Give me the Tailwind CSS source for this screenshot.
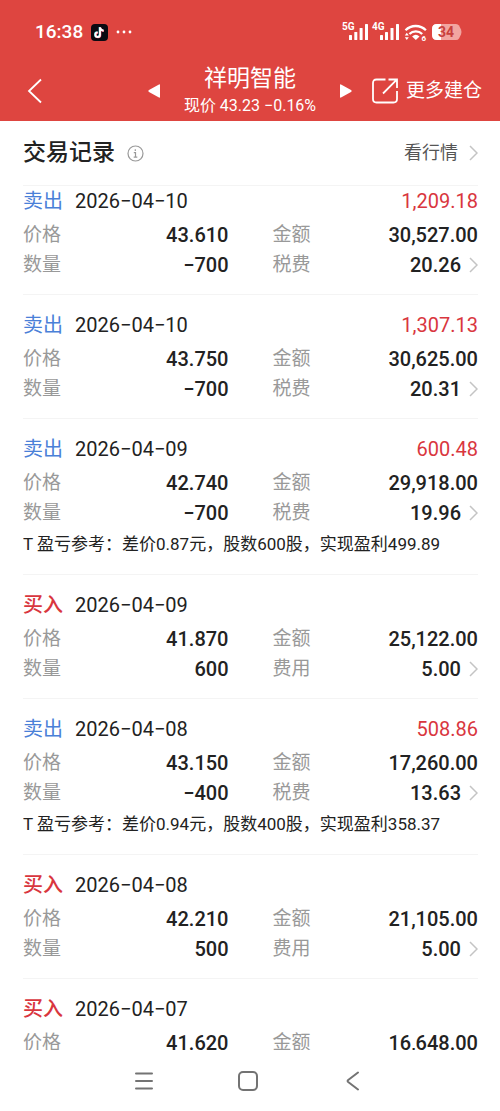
<!DOCTYPE html>
<html lang="zh-CN">

<head>
    <meta charset="UTF-8" />
    <meta name="viewport" content="width=device-width, initial-scale=1.0" />
    <title>祥明智能 - 交易记录</title>
    <script src="https://cdn.jsdelivr.net/npm/@tailwindcss/browser@4"></script>
</head>

<body class="h-screen flex flex-col overflow-hidden bg-white text-[#222222] font-[Roboto,'Noto_Sans_CJK_SC',sans-serif]">
    <header class="bg-[#de4540] text-white shrink-0">
        <!-- Status bar -->
        <div class="flex items-center justify-between h-[60px] pt-1 pl-[35px] pr-[38px]">
            <div class="flex items-center gap-2">
                <span class="text-[19px] leading-6 font-medium">16:38</span>
                <svg class="w-[17px] h-[17px]" viewBox="0 0 17 17">
                    <rect width="17" height="17" rx="4" fill="#0a0a12" />
                    <g fill="none" stroke-width="1.9">
                        <path d="M8.6 3v7.4a2.3 2.3 0 1 1-2.3-2.3M8.6 3.2c.3 1.8 1.6 3 3.6 3.2" stroke="#3fd9e4" />
                        <path d="M9.4 3.6V11a2.3 2.3 0 1 1-2.3-2.3M9.4 3.8c.3 1.8 1.6 3 3.6 3.2" stroke="#ef3a5d" />
                        <path d="M9 3.3v7.4a2.3 2.3 0 1 1-2.3-2.3M9 3.5c.3 1.8 1.6 3 3.6 3.2" stroke="#fff" />
                    </g>
                </svg>
                <svg class="w-4 h-1" viewBox="0 0 16 4" fill="#fff">
                    <circle cx="2" cy="2" r="1.4" />
                    <circle cx="8" cy="2" r="1.4" />
                    <circle cx="14" cy="2" r="1.4" />
                </svg>
            </div>
            <svg class="w-[120px] h-5" viewBox="0 0 120 20" fill="#fff">
                <g font-family="Roboto" font-weight="700" font-size="10">
                    <text x="0" y="8">5G</text>
                    <text x="30" y="8">4G</text>
                </g>
                <g>
                    <rect x="7" y="13" width="3" height="5" rx=".6" />
                    <rect x="12.300" y="10" width="3" height="8" rx=".6" />
                    <rect x="17.600" y="6" width="3" height="12" rx=".6" />
                    <rect x="23" y="2" width="3" height="16" rx=".6" />
                    <rect x="38" y="13" width="3" height="5" rx=".6" />
                    <rect x="43" y="10" width="3" height="8" rx=".6" />
                    <rect x="48.500" y="6" width="3" height="12" rx=".6" />
                    <rect x="54" y="2" width="3" height="16" rx=".6" />
                </g>
                <g fill="none" stroke="#fff" stroke-width="2.300">
                    <path d="M63.500 8.200a14.500 14.500 0 0 1 20.400 0" />
                    <path d="M67.400 12a9.300 9.300 0 0 1 12.800 0" />
                </g>
                <path d="M73.800 18l-3.700-3.500a5.600 5.600 0 0 1 7.400 0z" />
                <path d="M64.800 10.800l2 2.800h-4zM64.800 18l2-2.800h-4z" />
                <text x="79.500" y="18.500" font-family="Roboto" font-weight="700" font-size="8">6</text>
                <path d="M95 2h19q2 0 3 1.500l2 4q1 2.500 0 5l-2 4q-1 1.500-3 1.500H95q-5 0-5-5V7q0-5 5-5z" fill="#f2a5a0" />
                <path d="M95 2h4v16h-4q-5 0-5-5V7q0-5 5-5z" />
                <text x="96" y="15" font-family="Roboto" font-weight="700" font-size="14" fill="#c9403c">34</text>
            </svg>
        </div>
        <!-- Stock switcher -->
        <div class="grid grid-cols-[160px_1fr_160px] items-center h-[61px]">
            <div class="flex items-center justify-between pl-[27px]">
                <button aria-label="返回">
                    <svg class="w-[15px] h-[26px]" viewBox="0 0 15 26" fill="none" stroke="#fff" stroke-width="1.800"><path d="M14 1.500L2 13l12 11.500" /></svg>
                </button>
                <button aria-label="上一只">
                    <svg class="w-3 h-[14px]" viewBox="0 0 12 14" fill="#fff"><path d="M12 1v12q0 1-1 .6L1 8Q-.3 7 1 6L11 .4q1-.4 1 .6z" /></svg>
                </button>
            </div>
            <div class="text-center">
                <h1 class="text-[23px] leading-[30px] font-normal">祥明智能</h1>
                <p class="text-[16px] leading-6 whitespace-nowrap">现价 43.23 −0.16%</p>
            </div>
            <div class="flex items-center">
                <button aria-label="下一只">
                    <svg class="w-3 h-[14px]" viewBox="0 0 12 14" fill="#fff"><path d="M0 1v12q0 1 1 .6L11 8q1.300-1 0-2L1 .4Q0 0 0 1z" /></svg>
                </button>
                <a href="#" class="flex items-center gap-2 pl-5 text-[19px] leading-7 whitespace-nowrap">
                    <svg class="w-[26px] h-[26px]" viewBox="0 0 26 26" fill="none" stroke="#fff" stroke-width="1.800"><path d="M13.500 1.500H4.500Q1 1.500 1 5v16q0 3.500 3.500 3.500h17q3.500 0 3.500-3.500v-8M11 15.500L24.500 1.800M16.500 1.500H25V10" /></svg>
                    更多建仓
                </a>
            </div>
        </div>
    </header>

    <main class="flex-1 min-h-0 flex flex-col pl-[23px] pr-[22px]">
        <div class="flex items-center justify-between h-16 shrink-0">
            <div class="flex items-center gap-3">
                <h2 class="text-[23px] leading-8 font-medium">交易记录</h2>
                <button aria-label="说明">
                    <svg class="w-[17px] h-[17px]" viewBox="0 0 17 17" fill="none" stroke="#999" stroke-width="1.200">
                        <circle cx="8.500" cy="8.500" r="7.500" />
                        <path d="M8.300 4.300v1.600M6.800 7.700h1.700v4.500M6.700 12.200h3.600" />
                    </svg>
                </button>
            </div>
            <a href="#" class="flex items-center gap-[11px] text-[18px] leading-6 text-[#555555]">
                看行情
                <svg class="w-[9px] h-4" viewBox="0 0 9 16" fill="none" stroke="#c4c4c4" stroke-width="1.500"><path d="M1 1l7 7-7 7" /></svg>
            </a>
        </div>
        <ul id="records" class="flex-1 min-h-0 overflow-hidden"></ul>
    </main>

    <!-- System navigation -->
    <nav class="flex items-center justify-center h-[61px] shrink-0 pr-1">
        <button class="w-[104px] flex justify-center" aria-label="最近任务">
            <svg class="w-[18px] h-5" viewBox="0 0 18 20" fill="none" stroke="#737373" stroke-width="2" stroke-linecap="round"><path d="M1 2.500h16M1 10h16M1 17.500h16" /></svg>
        </button>
        <button class="w-[104px] flex justify-center" aria-label="主屏幕">
            <svg class="w-5 h-5" viewBox="0 0 20 20" fill="none" stroke="#737373" stroke-width="2"><rect x="1" y="1" width="18" height="18" rx="4" /></svg>
        </button>
        <button class="w-[104px] flex justify-center" aria-label="返回上一级">
            <svg class="w-[13px] h-5" viewBox="0 0 13 20" fill="none" stroke="#737373" stroke-width="2" stroke-linecap="round" stroke-linejoin="round"><path d="M12 1.500L2.200 9Q1 10 2.200 11L12 18.500" /></svg>
        </button>
    </nav>

    <script>
        const records = [
            { type: "卖出", date: "2026−04−10", profit: "1,209.18", price: "43.610", amount: "30,527.00", qty: "−700", fee: "20.26" },
            { type: "卖出", date: "2026−04−10", profit: "1,307.13", price: "43.750", amount: "30,625.00", qty: "−700", fee: "20.31" },
            { type: "卖出", date: "2026−04−09", profit: "600.48", price: "42.740", amount: "29,918.00", qty: "−700", fee: "19.96", note: "T 盈亏参考：差价0.87元，股数600股，实现盈利499.89" },
            { type: "买入", date: "2026−04−09", profit: "", price: "41.870", amount: "25,122.00", qty: "600", fee: "5.00" },
            { type: "卖出", date: "2026−04−08", profit: "508.86", price: "43.150", amount: "17,260.00", qty: "−400", fee: "13.63", note: "T 盈亏参考：差价0.94元，股数400股，实现盈利358.37" },
            { type: "买入", date: "2026−04−08", profit: "", price: "42.210", amount: "21,105.00", qty: "500", fee: "5.00" },
            { type: "买入", date: "2026−04−07", profit: "", price: "41.620", amount: "16,648.00" }
        ];

        const chevron = '<svg class="w-[9px] h-4 ml-2" viewBox="0 0 9 16" fill="none" stroke="#c4c4c4" stroke-width="1.500"><path d="M1 1l7 7-7 7" /></svg>';

        document.getElementById('records').innerHTML = records.map(r => `
            <li class="border-t border-[#f4f4f4] pt-[15px] pb-[14px] first:pt-0">
                <div class="flex items-center text-[20px] leading-[30px]">
                    <span class="${r.type === '卖出' ? 'text-[#4a80d8]' : 'text-[#d9363e] font-medium'}">${r.type}</span>
                    <span class="ml-3">${r.date}</span>
                    <span class="ml-auto text-[#d9363e]">${r.profit}</span>
                </div>
                <dl class="grid grid-cols-2 gap-x-11 mt-1 text-[20px] leading-[30px] font-medium">
                    <div class="flex justify-between"><dt class="text-[19px] font-normal text-[#999999]">价格</dt><dd>${r.price}</dd></div>
                    <div class="flex justify-between"><dt class="text-[19px] font-normal text-[#999999]">金额</dt><dd>${r.amount}</dd></div>
                    ${r.qty ? `
                    <div class="flex justify-between"><dt class="text-[19px] font-normal text-[#999999]">数量</dt><dd>${r.qty}</dd></div>
                    <div class="flex justify-between"><dt class="text-[19px] font-normal text-[#999999]">${r.type === '卖出' ? '税费' : '费用'}</dt><dd class="flex items-center">${r.fee}${chevron}</dd></div>` : ''}
                </dl>
                ${r.note ? `<p class="text-[17px] leading-8 whitespace-nowrap">${r.note}</p>` : ''}
            </li>`).join('');
    </script>
</body>

</html>
